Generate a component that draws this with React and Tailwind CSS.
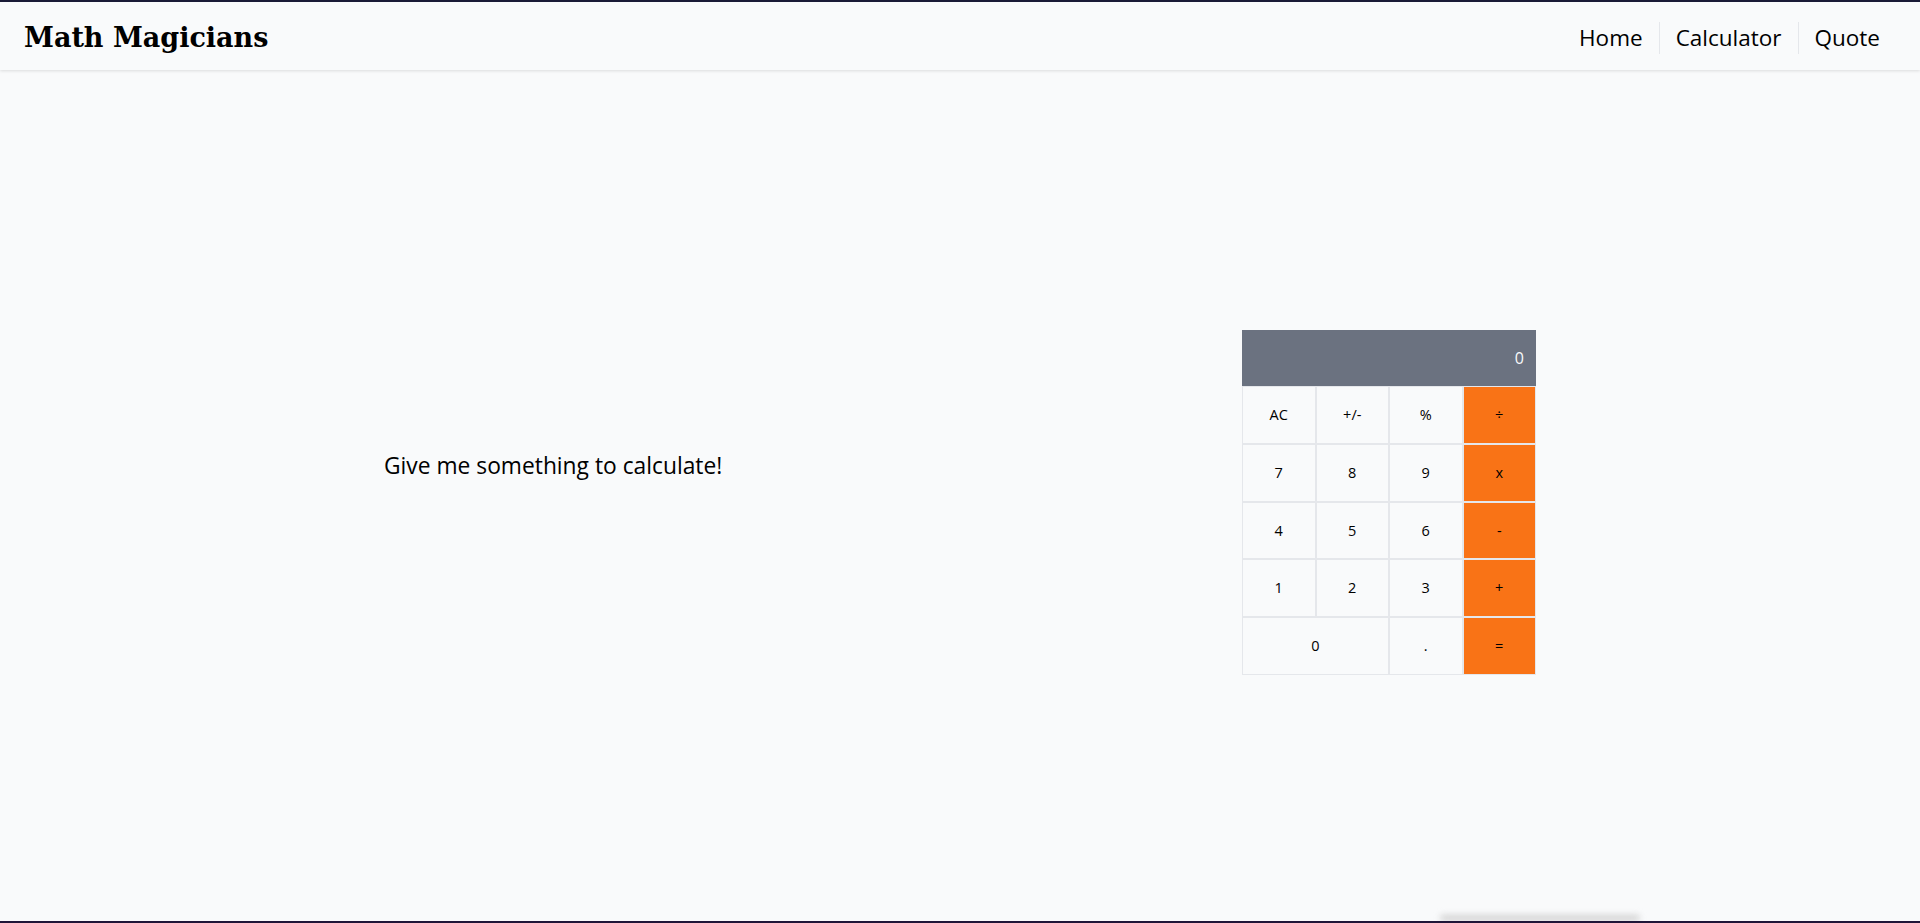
import { useState } from "react";

const buttons = [
  { label: "AC" },
  { label: "+/-" },
  { label: "%" },
  { label: "÷", op: true },
  { label: "7" },
  { label: "8" },
  { label: "9" },
  { label: "x", op: true },
  { label: "4" },
  { label: "5" },
  { label: "6" },
  { label: "-", op: true },
  { label: "1" },
  { label: "2" },
  { label: "3" },
  { label: "+", op: true },
  { label: "0", wide: true },
  { label: "." },
  { label: "=", op: true },
];

function Calculator() {
  const [display, setDisplay] = useState("0");

  const handleClick = (label) => {
    if (label === "AC") setDisplay("0");
  };

  return (
    <div className="w-[294px]">
      <div className="h-[56px] bg-[#6b7280] text-[#f9fafb] text-[16px] flex items-center justify-end pr-[12px]">
        {display}
      </div>
      <div className="grid grid-cols-4">
        {buttons.map((b) => (
          <button
            key={b.label}
            onClick={() => handleClick(b.label)}
            className={`h-[57.8px] border border-[#e5e7eb] text-[14.5px] text-black ${
              b.wide ? "col-span-2" : ""
            } ${b.op ? "bg-[#f97316]" : "bg-[#f9fafb]"}`}
          >
            {b.label}
          </button>
        ))}
      </div>
    </div>
  );
}

export default function App() {
  return (
    <div
      className="relative h-[923px] bg-[#f9fafb] border-t-2 border-t-[#1a1a36] border-b-2 border-b-[#1f1538] overflow-hidden flex flex-col"
      style={{ fontFamily: '"Open Sans", "Noto Sans", sans-serif' }}
    >
      <header className="h-[68px] shrink-0 flex items-center justify-between pt-[4px] pl-[24px] pr-[24px] bg-[#f9fafb] shadow-[0_1px_3px_rgba(0,0,0,0.12)] relative z-10">
        <h1
          className="text-[27px] font-bold text-black"
          style={{ fontFamily: '"DejaVu Serif", "Liberation Serif", serif' }}
        >
          Math Magicians
        </h1>
        <nav className="flex items-center text-[22.5px] text-black">
          <a href="#" className="px-[16px] leading-[32px]">
            Home
          </a>
          <a href="#" className="px-[16px] leading-[32px] border-l border-[#e5e7eb]">
            Calculator
          </a>
          <a href="#" className="pl-[16px] pr-[16px] leading-[32px] border-l border-[#e5e7eb]">
            Quote
          </a>
        </nav>
      </header>
      <main className="flex-1 flex items-start pt-[260px] pl-[384px]">
        <div className="w-[858px] mt-[120px]">
          <p className="text-[22.8px] leading-[32px] text-black">Give me something to calculate!</p>
        </div>
        <Calculator />
      </main>
      <div className="absolute bottom-0 left-[1440px] w-[200px] h-[6px] bg-[#d1d1d1] blur-[3px] rounded-full" />
    </div>
  );
}
